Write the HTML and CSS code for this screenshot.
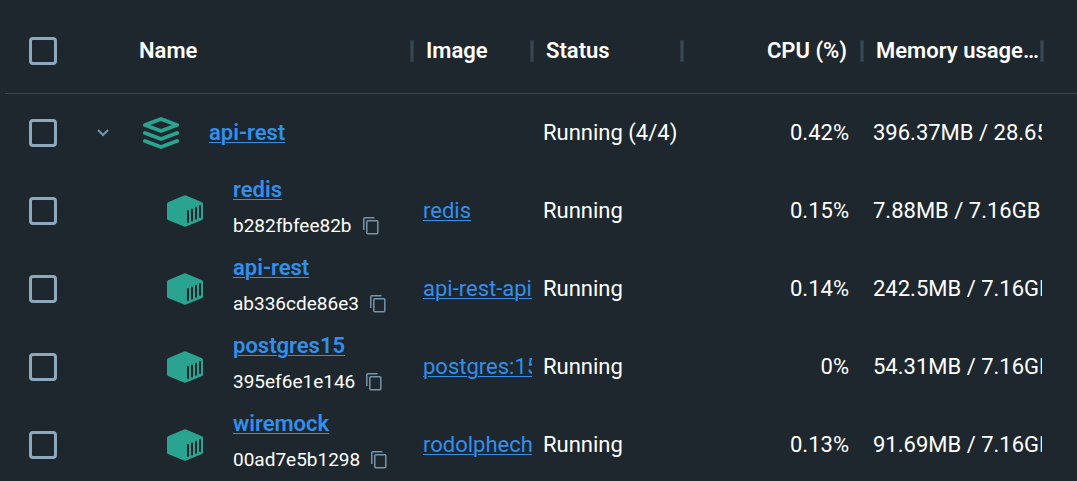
FILE: index.html
```html
<!DOCTYPE html>
<html lang="en">
<head>
<meta charset="utf-8">
<meta name="viewport" content="width=device-width, initial-scale=1">
<title>Containers</title>
<link rel="stylesheet" href="styles.css">
</head>
<body>
<svg class="sprite" aria-hidden="true">
  <symbol id="stack" viewBox="0 0 36 32">
    <g fill="none" stroke="currentColor" stroke-width="4" stroke-linecap="round" stroke-linejoin="round">
      <path d="M2 8 18 2 34 8 18 14Z"/>
      <path d="M2 16 18 22 34 16"/>
      <path d="M2 24 18 30 34 24"/>
    </g>
  </symbol>
  <symbol id="container" viewBox="0 0 36 32">
    <path fill="currentColor" d="M17 .4Q18 0 19 .4L35 7.2Q36 7.7 36 8.800V23.500Q36 24.500 35 25L19 31.600Q18 32 17 31.600L1 25Q0 24.500 0 23.500V8.800Q0 7.700 1 7.200Z"/>
    <path class="slots" d="M21 16V27M25 14.400V25.400M29 12.700V23.700M33 11V22"/>
  </symbol>
  <symbol id="copy" viewBox="0 0 16 18">
    <path fill="none" stroke="currentColor" stroke-width="1.500" d="M.8 13V1.800Q.8.8 1.800.8H11.500M4.800 3.800H13.800Q14.800 3.800 14.800 4.800V15.800Q14.800 16.800 13.800 16.800H4.800Q3.800 16.800 3.800 15.800V4.800Q3.800 3.800 4.800 3.800Z"/>
  </symbol>
</svg>
<main class="panel">
<table class="containers">
  <colgroup>
    <col class="col-check"><col class="col-expand"><col class="col-name"><col class="col-image"><col class="col-status"><col class="col-cpu"><col class="col-memory"><col>
  </colgroup>
  <thead>
    <tr>
      <th class="check"><input type="checkbox" aria-label="Select all"></th>
      <td></td>
      <th class="split" scope="col">Name</th>
      <th class="split" scope="col">Image</th>
      <th class="split" scope="col">Status</th>
      <th class="split number" scope="col">CPU (%)</th>
      <th class="split" scope="col">Memory usage…</th>
      <td></td>
    </tr>
  </thead>
  <tbody>
    <tr>
      <td class="check"><input type="checkbox" aria-label="Select api-rest group"></td>
      <td class="expand"><button class="icon-button" type="button" aria-label="Collapse api-rest" aria-expanded="true"><svg class="chevron" viewBox="0 0 12 8"><path d="M1 1 6 6 11 1"/></svg></button></td>
      <td><div class="item group"><svg class="kind"><use href="#stack"/></svg><a class="name" href="#">api-rest</a></div></td>
      <td></td>
      <td>Running (4/4)</td>
      <td class="number">0.42%</td>
      <td>396.37MB / 28.65GB</td>
      <td></td>
    </tr>
    <tr>
      <td class="check"><input type="checkbox" aria-label="Select redis"></td>
      <td></td>
      <td><div class="item"><svg class="kind"><use href="#container"/></svg><div class="label"><a class="name" href="#">redis</a><div class="id">b282fbfee82b<button class="icon-button" type="button" aria-label="Copy redis ID"><svg class="copy"><use href="#copy"/></svg></button></div></div></div></td>
      <td><a href="#">redis</a></td>
      <td>Running</td>
      <td class="number">0.15%</td>
      <td>7.88MB / 7.16GB</td>
      <td></td>
    </tr>
    <tr>
      <td class="check"><input type="checkbox" aria-label="Select api-rest"></td>
      <td></td>
      <td><div class="item"><svg class="kind"><use href="#container"/></svg><div class="label"><a class="name" href="#">api-rest</a><div class="id">ab336cde86e3<button class="icon-button" type="button" aria-label="Copy api-rest ID"><svg class="copy"><use href="#copy"/></svg></button></div></div></div></td>
      <td><a href="#">api-rest-api</a></td>
      <td>Running</td>
      <td class="number">0.14%</td>
      <td>242.5MB / 7.16GB</td>
      <td></td>
    </tr>
    <tr>
      <td class="check"><input type="checkbox" aria-label="Select postgres15"></td>
      <td></td>
      <td><div class="item"><svg class="kind"><use href="#container"/></svg><div class="label"><a class="name" href="#">postgres15</a><div class="id">395ef6e1e146<button class="icon-button" type="button" aria-label="Copy postgres15 ID"><svg class="copy"><use href="#copy"/></svg></button></div></div></div></td>
      <td><a href="#">postgres:15</a></td>
      <td>Running</td>
      <td class="number">0%</td>
      <td>54.31MB / 7.16GB</td>
      <td></td>
    </tr>
    <tr>
      <td class="check"><input type="checkbox" aria-label="Select wiremock"></td>
      <td></td>
      <td><div class="item"><svg class="kind"><use href="#container"/></svg><div class="label"><a class="name" href="#">wiremock</a><div class="id">00ad7e5b1298<button class="icon-button" type="button" aria-label="Copy wiremock ID"><svg class="copy"><use href="#copy"/></svg></button></div></div></div></td>
      <td><a href="#">rodolphech</a></td>
      <td>Running</td>
      <td class="number">0.13%</td>
      <td>91.69MB / 7.16GB</td>
      <td></td>
    </tr>
  </tbody>
</table>
</main>
</body>
</html>
```
FILE: styles.css
```css
:root {
  --bg: #1d272d;
  --line: #364955;
  --muted: #8da8bb;
  --link: #338fec;
  --teal: #2aa391;
}
*, *::after { box-sizing: border-box; }
body {
  margin: 0;
  background: var(--bg);
  color: #fff;
  font: 400 22px/28px Roboto, sans-serif;
}
.sprite { position: absolute; width: 0; height: 0; }
.panel { height: 100vh; overflow: hidden; padding: 8px 0 0 5px; }
.containers { width: 100%; table-layout: fixed; border-collapse: separate; border-spacing: 0; }
.col-check { width: 75px; }
.col-expand { width: 45px; }
.col-name { width: 287px; }
.col-image { width: 120px; }
.col-status { width: 150px; }
.col-cpu, .col-memory { width: 180px; }
th, td { padding: 0 0 0 11px; text-align: left; vertical-align: middle; white-space: nowrap; overflow: hidden; }
thead th, thead td { height: 86px; border-bottom: 1px solid var(--line); }
thead th { font-weight: 600; padding-left: 14px; }
tbody td { height: 78px; }
tbody .number { text-align: right; padding-right: 13px; }
thead .number { text-align: right; padding-right: 15px; }
.split { position: relative; overflow: visible; }
.split::after {
  content: "";
  position: absolute;
  top: 32px;
  right: -2px;
  width: 4px;
  height: 22px;
  border: 1px solid #2a3842;
  background: var(--line);
}
.containers .check { padding: 0 0 0 24px; }
.containers .expand { padding-left: 17px; }
input[type="checkbox"] {
  appearance: none;
  display: block;
  width: 28px;
  height: 28px;
  margin: 0;
  border: 3px solid var(--muted);
  border-radius: 4px;
}
a { color: var(--link); text-decoration: underline; text-decoration-thickness: 1px; text-underline-offset: 2px; }
.name { font-weight: 600; }
.icon-button { display: flex; padding: 0; border: 0; background: none; color: #7794ab; cursor: pointer; }
.chevron { width: 12px; height: 8px; fill: none; stroke: currentColor; stroke-width: 2; }
.item { display: flex; align-items: center; gap: 30px; padding-left: 31px; }
.group { padding-left: 7px; }
.kind { width: 36px; height: 32px; flex: none; color: var(--teal); }
.slots { fill: none; stroke: var(--bg); stroke-width: 2; stroke-linecap: round; }
.label { display: flex; flex-direction: column; gap: 8px; align-items: flex-start; padding-bottom: 6px; }
.id { display: flex; align-items: center; gap: 11px; font-size: 19px; }
.copy { width: 16px; height: 18px; }
```
